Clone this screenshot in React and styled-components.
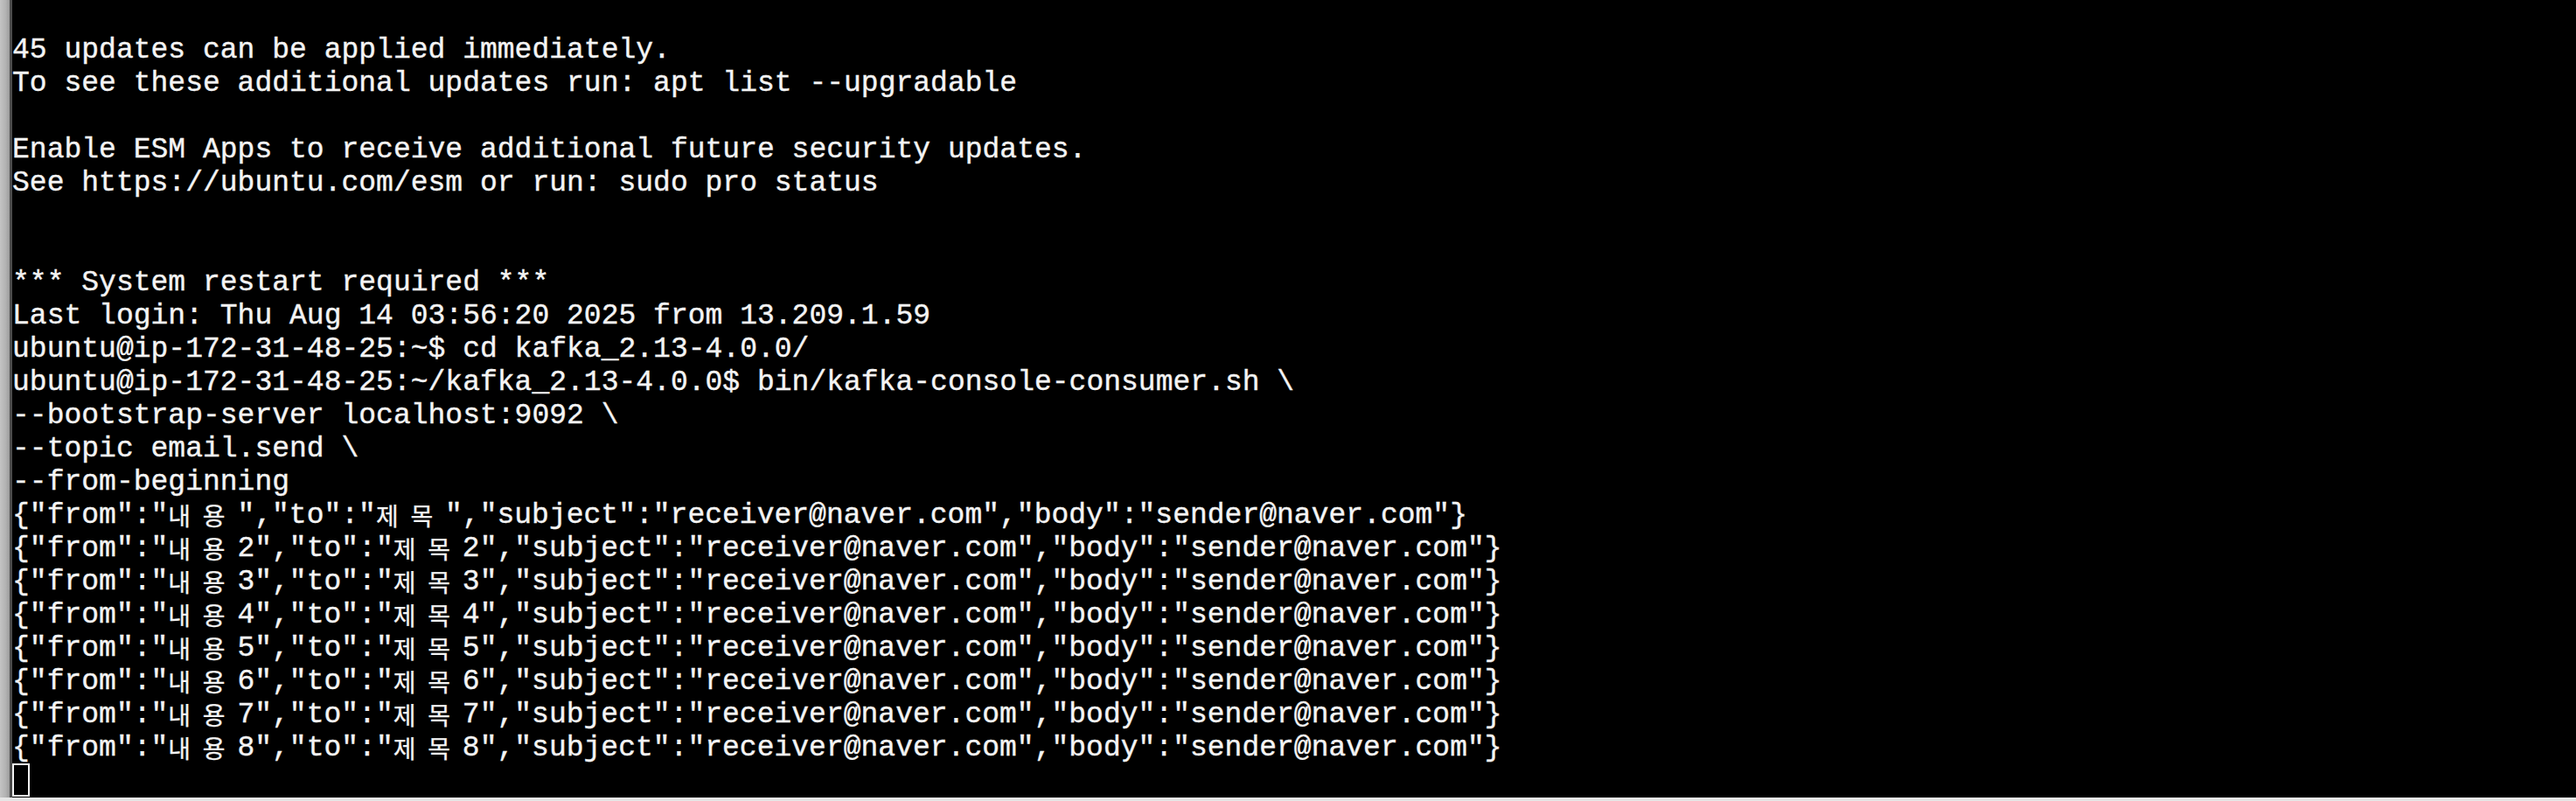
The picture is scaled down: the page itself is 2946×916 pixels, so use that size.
import React from 'react'
import styled, { createGlobalStyle } from 'styled-components'

const GlobalStyle = createGlobalStyle`
  html, body {
    margin: 0;
    padding: 0;
    background: #000;
    overflow: hidden;
  }
`

const Window = styled.div`
  width: 2946px;
  height: 916px;
  display: flex;
  flex-direction: column;
  background: #000;
`

const Body = styled.div`
  flex: 1;
  display: flex;
  min-height: 0;
`

const SideEdge = styled.div`
  width: 11px;
  background: linear-gradient(to right, #c4c4c4, #b2b2b2 60%, #9c9c9c);
`

const EdgeLine = styled.div`
  width: 3px;
  background: #4a4a4a;
`

const Screen = styled.div`
  flex: 1;
  padding-top: 37px;
  background: #000;
  color: #f4f4f4;
  font-family: "Liberation Mono", "Courier New", monospace;
  font-size: 33px;
  overflow: hidden;
`

const Line = styled.div`
  box-sizing: border-box;
  height: 38px;
  padding-top: 3px;
  line-height: 35px;
  white-space: pre;
  -webkit-text-stroke: 0.4px #f4f4f4;
`

const Wide = styled.span`
  display: inline-block;
  width: 39.55px;
  height: 35px;
  font-family: "Noto Sans CJK KR", sans-serif;
  font-size: 28px;
  line-height: 35px;
  vertical-align: top;
  -webkit-text-stroke: 0.3px #f4f4f4;
`

const Cursor = styled.div`
  width: 20px;
  height: 38px;
  box-sizing: border-box;
  border: 2px solid #f4f4f4;
`

const BottomEdge = styled.div`
  height: 4px;
  background: #e6e6e6;
`

const lines = [
  '45 updates can be applied immediately.',
  'To see these additional updates run: apt list --upgradable',
  '',
  'Enable ESM Apps to receive additional future security updates.',
  'See https://ubuntu.com/esm or run: sudo pro status',
  '',
  '',
  '*** System restart required ***',
  'Last login: Thu Aug 14 03:56:20 2025 from 13.209.1.59',
  'ubuntu@ip-172-31-48-25:~$ cd kafka_2.13-4.0.0/',
  'ubuntu@ip-172-31-48-25:~/kafka_2.13-4.0.0$ bin/kafka-console-consumer.sh \\',
  '--bootstrap-server localhost:9092 \\',
  '--topic email.send \\',
  '--from-beginning',
  '{"from":"내용","to":"제목","subject":"receiver@naver.com","body":"sender@naver.com"}',
  ...[2, 3, 4, 5, 6, 7, 8].map(
    (n) => `{"from":"내용${n}","to":"제목${n}","subject":"receiver@naver.com","body":"sender@naver.com"}`
  ),
]

// wide (hangul) glyphs take two terminal cells
const renderText = (text) =>
  Array.from(text).map((ch, i) =>
    /[\uac00-\ud7a3]/.test(ch) ? <Wide key={i}>{ch}</Wide> : ch
  )

const App = () => {
  return (
    <>
      <GlobalStyle />
      <Window>
        <Body>
          <SideEdge />
          <EdgeLine />
          <Screen>
            {lines.map((text, i) => (
              <Line key={i}>{renderText(text)}</Line>
            ))}
            <Cursor />
          </Screen>
        </Body>
        <BottomEdge />
      </Window>
    </>
  )
}

export default App
